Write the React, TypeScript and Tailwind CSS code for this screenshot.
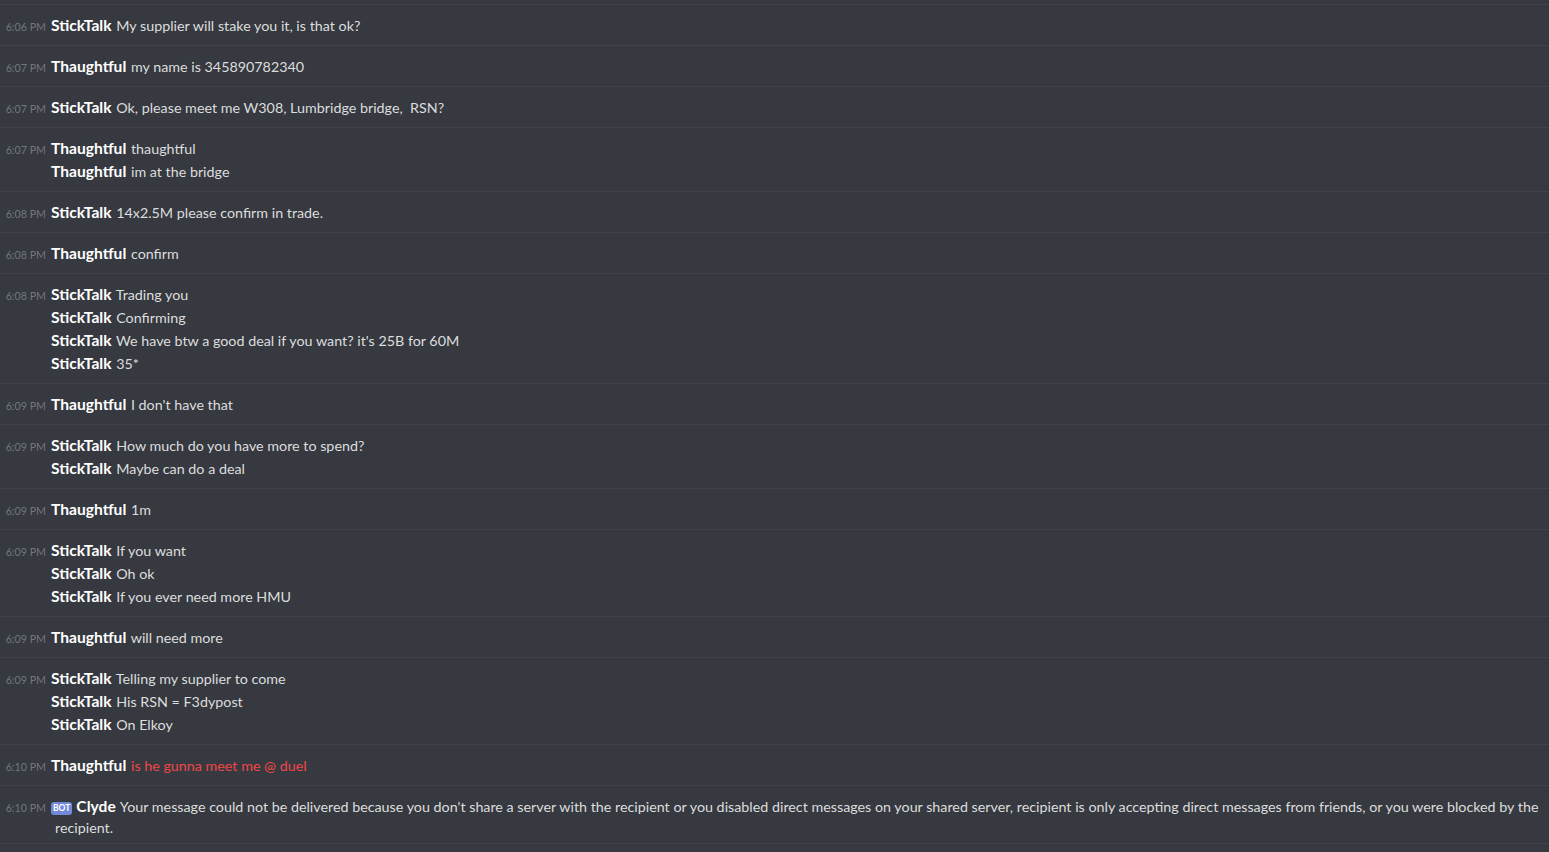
type Line = { name: string; text: string; red?: boolean; bot?: boolean };
type Group = { time: string; lines: Line[]; tight?: boolean };

const S = 'StickTalk';
const T = 'Thaughtful';

const groups: Group[] = [
  { time: '6:06 PM', lines: [{ name: S, text: 'My supplier will stake you it, is that ok?' }] },
  { time: '6:07 PM', lines: [{ name: T, text: 'my name is 345890782340' }] },
  { time: '6:07 PM', lines: [{ name: S, text: 'Ok, please meet me W308, Lumbridge bridge,  RSN?' }] },
  {
    time: '6:07 PM',
    lines: [
      { name: T, text: 'thaughtful' },
      { name: T, text: 'im at the bridge' },
    ],
  },
  { time: '6:08 PM', lines: [{ name: S, text: '14x2.5M please confirm in trade.' }] },
  { time: '6:08 PM', lines: [{ name: T, text: 'confirm' }] },
  {
    time: '6:08 PM',
    lines: [
      { name: S, text: 'Trading you' },
      { name: S, text: 'Confirming' },
      { name: S, text: "We have btw a good deal if you want? it's 25B for 60M" },
      { name: S, text: '35*' },
    ],
  },
  { time: '6:09 PM', lines: [{ name: T, text: "I don't have that" }] },
  {
    time: '6:09 PM',
    lines: [
      { name: S, text: 'How much do you have more to spend?' },
      { name: S, text: 'Maybe can do a deal' },
    ],
  },
  { time: '6:09 PM', lines: [{ name: T, text: '1m' }] },
  {
    time: '6:09 PM',
    lines: [
      { name: S, text: 'If you want' },
      { name: S, text: 'Oh ok' },
      { name: S, text: 'If you ever need more HMU' },
    ],
  },
  { time: '6:09 PM', lines: [{ name: T, text: 'will need more' }] },
  {
    time: '6:09 PM',
    lines: [
      { name: S, text: 'Telling my supplier to come' },
      { name: S, text: 'His RSN = F3dypost' },
      { name: S, text: 'On Elkoy' },
    ],
  },
  { time: '6:10 PM', lines: [{ name: T, text: 'is he gunna meet me @ duel', red: true }] },
  {
    time: '6:10 PM',
    tight: true,
    lines: [
      {
        name: 'Clyde',
        bot: true,
        text: "Your message could not be delivered because you don't share a server with the recipient or you disabled direct messages on your shared server, recipient is only accepting direct messages from friends, or you were blocked by the recipient.",
      },
    ],
  },
];

function MessageGroup({ group }: { group: Group }) {
  return (
    <div
      className={
        'border-t border-[#40434a] pt-[9px] pr-[2px] ' + (group.tight ? 'pb-[4px]' : 'pb-[8px]')
      }
    >
      {group.lines.map((line, i) => (
        <div key={i} className="flex items-baseline">
          <div className="w-[46px] shrink-0 text-right text-[10.7px] leading-[12px] text-[#72767d]">
            {i === 0 ? group.time : ''}
          </div>
          <div className="ml-[5px] flex-1 py-px pl-[4px] -indent-[4px] text-[14.3px] leading-[21px] text-[#dcddde]">
            {line.bot && (
              <span className="mr-[4px] inline-block indent-0 rounded-[3px] bg-[#7289da] px-[2px] align-[1px] text-[8.5px] leading-[13px] font-bold text-white">
                BOT
              </span>
            )}
            <span className="mr-px text-[15.6px] leading-[16px] font-bold text-white">{line.name}</span>{' '}
            <span className={'whitespace-pre-wrap ' + (line.red ? 'text-[#f04747]' : '')}>
              {line.text}
            </span>
          </div>
        </div>
      ))}
    </div>
  );
}

export default function App() {
  return (
    <div className="h-[852px] overflow-hidden bg-[#36393f] font-['Lato','Open_Sans',sans-serif]">
      <div className="h-[4px]" />
      {groups.map((g, i) => (
        <MessageGroup key={i} group={g} />
      ))}
      <div className="h-[20px] border-t border-[#40434a]" />
    </div>
  );
}
